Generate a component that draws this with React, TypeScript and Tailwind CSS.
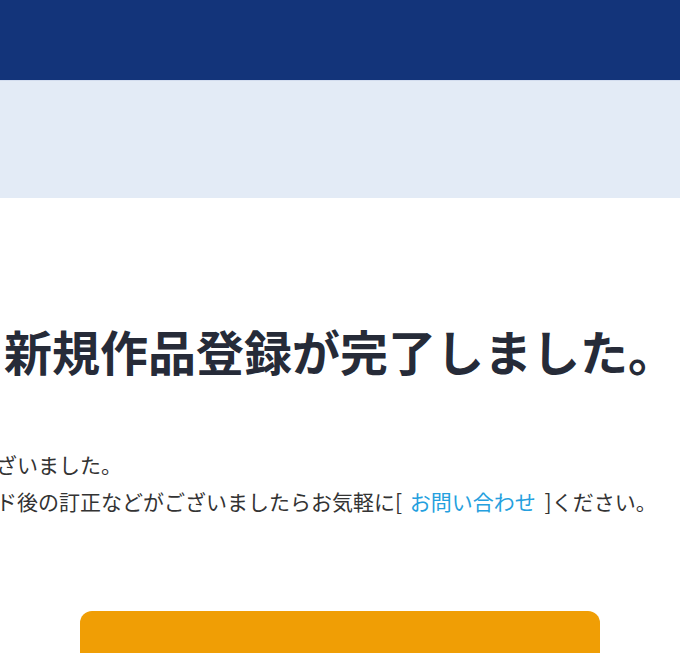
export default function App() {
  return (
    <div
      className="h-screen overflow-hidden bg-white"
      style={{ fontFamily: '"Noto Sans CJK JP", "Noto Sans", sans-serif' }}
    >
      <header className="h-[80px] bg-[#13347a]" />
      <div className="h-[118px] border-t border-[#d3ddef] bg-[#e3ebf6]" />

      <main className="flex flex-col items-center overflow-hidden pt-[128px] pb-10">
        <div className="w-[1024px] shrink-0">
          <h1 className="text-center text-[48px] font-bold leading-none text-[#262b38]">
            新規作品登録が完了しました。
          </h1>

          <div className="mt-[72px] text-[21px] leading-[37px] text-[#333333]">
            <p className="whitespace-nowrap">誠にありがとうございました。</p>
            <p className="whitespace-nowrap">
              データアップロード後の訂正などがございましたらお気軽に[{" "}
              <a href="#" className="ml-[3px] mr-[4px] text-[#259fde]">
                お問い合わせ
              </a>{" "}
              ]ください。
            </p>
          </div>

          <div className="mx-auto mt-[91px] h-[80px] w-[520px] rounded-xl bg-[#f09e05]" />
        </div>
      </main>
    </div>
  )
}
